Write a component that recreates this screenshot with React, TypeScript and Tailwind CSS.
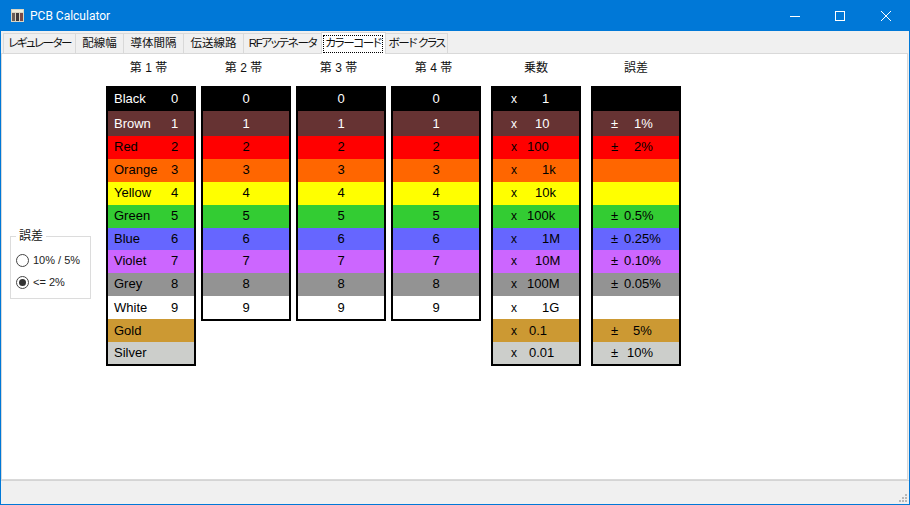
import React from "react";

const font = "[font-family:'Liberation_Sans','Noto_Sans_CJK_JP',sans-serif]";

const rows = [
  { bg: "bg-black", text: "text-white", h: "h-[23px]", pb: "pb-[2px]", name: "Black" },
  { bg: "bg-[#663333]", text: "text-white", h: "h-[25px]", pb: "pb-0", name: "Brown" },
  { bg: "bg-[#ff0000]", text: "text-black", h: "h-[23px]", pb: "pb-[2px]", name: "Red" },
  { bg: "bg-[#ff6600]", text: "text-black", h: "h-[23px]", pb: "pb-[2px]", name: "Orange" },
  { bg: "bg-[#ffff00]", text: "text-black", h: "h-[23px]", pb: "pb-[2px]", name: "Yellow" },
  { bg: "bg-[#33cc33]", text: "text-black", h: "h-[23px]", pb: "pb-[2px]", name: "Green" },
  { bg: "bg-[#6666ff]", text: "text-black", h: "h-[22px]", pb: "pb-0", name: "Blue" },
  { bg: "bg-[#cc66ff]", text: "text-black", h: "h-[23px]", pb: "pb-[2px]", name: "Violet" },
  { bg: "bg-[#939393]", text: "text-black", h: "h-[23px]", pb: "pb-[2px]", name: "Grey" },
  { bg: "bg-white", text: "text-black", h: "h-[23px]", pb: "pb-0", name: "White" },
  { bg: "bg-[#cc9933]", text: "text-black", h: "h-[23px]", pb: "pb-0", name: "Gold" },
  { bg: "bg-[#cccecb]", text: "text-black", h: "h-[22px]", pb: "pb-0", name: "Silver" },
];

const multipliers = [
  { v: "1", ml: "ml-[24px]" },
  { v: "10", ml: "ml-[17px]" },
  { v: "100", ml: "ml-[9px]" },
  { v: "1k", ml: "ml-[24px]" },
  { v: "10k", ml: "ml-[17px]" },
  { v: "100k", ml: "ml-[9px]" },
  { v: "1M", ml: "ml-[24px]" },
  { v: "10M", ml: "ml-[17px]" },
  { v: "100M", ml: "ml-[9px]" },
  { v: "1G", ml: "ml-[24px]" },
  { v: "0.1", ml: "ml-[11px]" },
  { v: "0.01", ml: "ml-[11px]" },
];

const tolerances = [
  null,
  { v: "1%", ml: "ml-[16px]" },
  { v: "2%", ml: "ml-[16px]" },
  null,
  null,
  { v: "0.5%", ml: "ml-[6px]" },
  { v: "0.25%", ml: "ml-[6px]" },
  { v: "0.10%", ml: "ml-[6px]" },
  { v: "0.05%", ml: "ml-[6px]" },
  null,
  { v: "5%", ml: "ml-[15px]" },
  { v: "10%", ml: "ml-[9px]" },
];

const tabs = [
  { label: "レギュレーター", w: "w-[73px]", track: "tracking-[-1.5px]" },
  { label: "配線幅", w: "w-[49px]", track: "tracking-normal" },
  { label: "導体間隔", w: "w-[61px]", track: "tracking-normal" },
  { label: "伝送線路", w: "w-[61px]", track: "tracking-normal" },
  { label: "RFアッテネータ", w: "w-[79px]", track: "tracking-[-1.3px]" },
];

function Column({ title, ml, pr = "pr-0", children }: { title: string; ml: string; pr?: string; children: React.ReactNode }) {
  return (
    <div className={`${ml} w-[90px] flex flex-col`}>
      <div className={`h-[32px] flex items-start justify-center pt-[6px] ${pr} text-[12px] leading-[16px] text-[#111]`}>{title}</div>
      <div className="border-2 border-black flex flex-col">{children}</div>
    </div>
  );
}

function Tab({ label, w, track }: { label: string; w: string; track: string }) {
  return (
    <div className={`${w} ${track} h-[20px] border border-b-0 border-[#d9d9d9] -ml-px first:ml-0 flex items-center justify-center text-[11.5px] leading-none text-[#111] whitespace-nowrap bg-[#f0f0f0] [font-feature-settings:'palt']`}>
      {label}
    </div>
  );
}

function Radio({ checked, label }: { checked?: boolean; label: string }) {
  return (
    <div className="flex items-center gap-[4px] h-[22px]">
      <span className="w-[13px] h-[13px] rounded-full border border-[#444] bg-white flex items-center justify-center">
        {checked && <span className="w-[7px] h-[7px] rounded-full bg-[#333]" />}
      </span>
      <span className="text-[11px] leading-none text-[#222]">{label}</span>
    </div>
  );
}

export default function App() {
  return (
    <div className={`w-[910px] h-[505px] flex flex-col bg-[#f0f0f0] overflow-hidden border-x border-b border-[#0078d7] ${font}`}>
      {/* Title bar */}
      <div className="h-[31px] shrink-0 -mx-px bg-[#0078d7] flex items-center text-white pr-px">
        <svg className="ml-[11px] w-[13px] h-[13px]" viewBox="0 0 13 13">
          <rect x="0" y="0" width="13" height="13" fill="#d9d6c4" />
          <rect x="1" y="1" width="11" height="2" fill="#f2efdc" />
          <rect x="1" y="4" width="3" height="8" fill="#6b5f58" />
          <rect x="5" y="4" width="3" height="8" fill="#3f3a3a" />
          <rect x="9" y="4" width="3" height="8" fill="#7d4a46" />
        </svg>
        <span className="ml-[6px] text-[12px] leading-none font-['Roboto',sans-serif]">PCB Calculator</span>
        <div className="ml-auto flex items-center">
          <div className="w-[44px] h-[31px] flex items-center justify-center">
            <svg width="10" height="10" viewBox="0 0 10 10"><rect x="0" y="5" width="10" height="1" fill="#fff" /></svg>
          </div>
          <div className="w-[46px] h-[31px] flex items-center justify-center">
            <svg width="10" height="10" viewBox="0 0 10 10"><rect x="0.5" y="0.5" width="9" height="9" fill="none" stroke="#fff" /></svg>
          </div>
          <div className="w-[46px] h-[31px] flex items-center justify-center">
            <svg width="10" height="10" viewBox="0 0 10 10"><path d="M0 0 L10 10 M10 0 L0 10" stroke="#fff" strokeWidth="1" /></svg>
          </div>
        </div>
      </div>

      {/* Tabs */}
      <div className="h-[22px] shrink-0 flex items-end pl-[2px] relative z-10">
        {tabs.map((t) => (
          <Tab key={t.label} label={t.label} w={t.w} track={t.track} />
        ))}
        <div className="w-[65px] h-[22px] -ml-px -mb-px border border-b-0 border-[#d9d9d9] bg-white pt-[2px] pl-[1px] pr-[2px] pb-[1px] relative z-10">
          <div className="w-full h-full border border-dotted border-black flex items-center justify-center text-[11.5px] leading-none tracking-[-1.3px] text-[#111] whitespace-nowrap [font-feature-settings:'palt']">カラーコード</div>
        </div>
        <Tab label="ボード クラス" w="w-[63px]" track="tracking-[-1.3px]" />
      </div>

      {/* Panel */}
      <div className="h-[427px] shrink-0 mr-px bg-white border border-[#d9d9d9] flex items-start">
        <fieldset className="ml-[8px] mt-[176px] w-[81px] h-[69px] border border-[#dcdcdc] px-[5px] pt-[6px]">
          <legend className="px-[3px] mt-[1px] ml-0 text-[12px] leading-[13px] text-[#111]">誤差</legend>
          <Radio label="10% / 5%" />
          <Radio checked label="<= 2%" />
        </fieldset>

        <Column title="第 1 帯" ml="ml-[15px]" pr="pr-[5px]">
          {rows.map((r, i) => (
            <div key={r.name} className={`${r.h} ${r.bg} ${r.text} ${r.pb} pl-[6px] flex items-center text-[13px]`}>
              <span className="w-[57px]">{r.name}</span>
              <span>{r.name === "Gold" || r.name === "Silver" ? "" : i}</span>
            </div>
          ))}
        </Column>

        {["第 2 帯", "第 3 帯", "第 4 帯"].map((title) => (
          <Column key={title} title={title} ml="ml-[5px]" pr="pr-[5px]">
            {rows.slice(0, 10).map((r, i) => (
              <div key={r.name} className={`${r.h} ${r.bg} ${r.text} ${r.pb} flex items-center justify-center text-[13px]`}>
                {i}
              </div>
            ))}
          </Column>
        ))}

        <Column title="乗数" ml="ml-[10px]" pr="pr-0">
          {rows.map((r, i) => (
            <div key={r.name} className={`${r.h} ${r.bg} ${r.text} ${r.pb} pl-[18px] flex items-center text-[13px]`}>
              <span className="text-[12px] w-[7px]">x</span>
              <span className={multipliers[i].ml}>{multipliers[i].v}</span>
            </div>
          ))}
        </Column>

        <Column title="誤差" ml="ml-[10px]" pr="pr-0">
          {rows.map((r, i) => {
            const t = tolerances[i];
            return (
              <div key={r.name} className={`${r.h} ${r.bg} ${r.text} ${r.pb} pl-[18px] flex items-center text-[13px]`}>
                {t && (
                  <>
                    <span className="w-[7px]">±</span>
                    <span className={t.ml}>{t.v}</span>
                  </>
                )}
              </div>
            );
          })}
        </Column>
      </div>

      {/* Status bar */}
      <div className="flex-1 border-t border-[#d4d4d4] flex justify-end items-end pr-[1px] pb-[1px]">
        <svg width="10" height="10" viewBox="0 0 10 10">
          {[[7, 1], [4, 4], [7, 4], [1, 7], [4, 7], [7, 7]].map(([x, y]) => (
            <rect key={`${x}-${y}`} x={x} y={y} width="2" height="2" fill="#b8b8b8" />
          ))}
        </svg>
      </div>
    </div>
  );
}
